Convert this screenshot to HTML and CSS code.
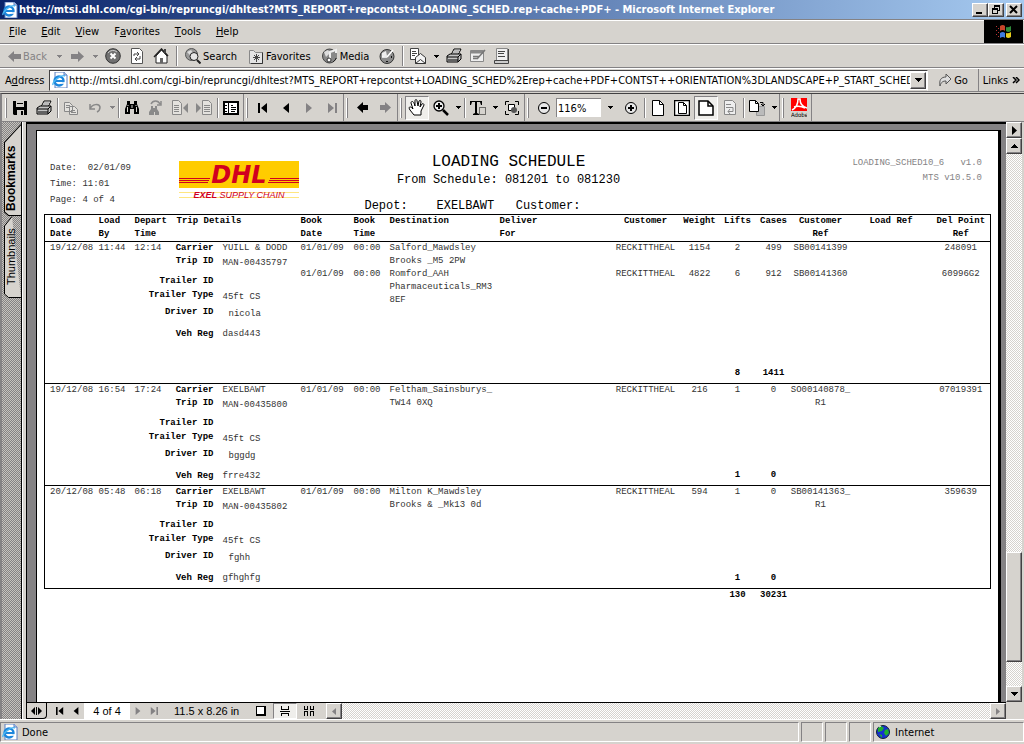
FILE: index.html
```
<!DOCTYPE html>
<html lang="en">
<head>
    <meta charset="UTF-8">
    <meta name="viewport" content="width=device-width, initial-scale=1.0">
    <title>Loading Schedule</title>
    <link rel="stylesheet" href="styles.css">
</head>
<body>

<!-- Shared icons -->
<svg width="0" height="0" class="defs">
    <symbol id="i-ie" viewBox="0 0 16 16">
        <path d="M3 0h9l3 3v13H3z" fill="#fff" stroke="#5a7fc0"/>
        <path d="M12 0v3h3" fill="#c8d8f4" stroke="#5a7fc0"/>
        <circle cx="7" cy="9" r="4.5" fill="none" stroke="#1c86dc" stroke-width="2.4"/>
        <path d="M3 9h8" stroke="#1c86dc" stroke-width="2"/>
        <path d="M9 11h4" stroke="#fff" stroke-width="1.6"/>
        <path d="M1 13C0 10 9 2 13 4" fill="none" stroke="#49b6f2" stroke-width="1.4"/>
    </symbol>
    <symbol id="i-down" viewBox="0 0 5 3"><path d="M0 0h5v1H0zM1 1h3v1H1zM2 2h1v1H2z"/></symbol>
    <symbol id="i-left" viewBox="0 0 6 10"><path d="M6 0v10L0 5z"/></symbol>
    <symbol id="i-right" viewBox="0 0 6 10"><path d="M0 0v10L6 5z"/></symbol>
    <symbol id="i-first" viewBox="0 0 10 10"><path d="M0 0h2v10H0zM9 0v10L3 5z"/></symbol>
    <symbol id="i-last" viewBox="0 0 10 10"><path d="M8 0h2v10H8zM1 0v10l6-5z"/></symbol>
    <symbol id="i-arrow" viewBox="0 0 13 11"><path d="M0 5.5L6 0v3h7v5H6v3z"/></symbol>
    <symbol id="i-arrow-short" viewBox="0 0 11 11"><path d="M0 5.5L6 0v3h5v5H6v3z"/></symbol>
    <symbol id="i-printer" viewBox="0 0 16 16">
        <path d="M5 7l3-6h7l-3 6z" fill="#fff" stroke="#000"/>
        <path d="M8 3h5M7 5h5" stroke="#777"/>
        <path d="M1 8l3-2h11v5l-3 3H1z" fill="#c4c4c4" stroke="#000"/>
        <path d="M1 9h11l3-3M12 9v5M2 12h10" fill="none" stroke="#000"/>
    </symbol>
</svg>

<header class="title-bar">
    <svg class="icon"><use href="#i-ie"/></svg>
    <h1>http://mtsi.dhl.com/cgi-bin/repruncgi/dhltest?MTS_REPORT+repcontst+LOADING_SCHED.rep+cache+PDF+ - Microsoft Internet Explorer</h1>
    <div class="window-buttons">
        <button type="button" aria-label="Minimize"><svg width="10" height="9"><path d="M1 7h6v2H1z"/></svg></button>
        <button type="button" aria-label="Restore"><svg width="10" height="9"><path d="M3 0h6v6H7V5h1V2H4v1H3zM1 3h6v6H1zM2 5v3h4V5z" fill-rule="evenodd"/></svg></button>
        <button type="button" aria-label="Close" class="close"><svg width="10" height="9"><path d="M1 1l7 7M8 1L1 8" stroke="#000" stroke-width="2"/></svg></button>
    </div>
</header>

<nav class="menu-bar">
    <button type="button"><u>F</u>ile</button>
    <button type="button"><u>E</u>dit</button>
    <button type="button"><u>V</u>iew</button>
    <button type="button">F<u>a</u>vorites</button>
    <button type="button"><u>T</u>ools</button>
    <button type="button"><u>H</u>elp</button>
    <div class="throbber">
        <svg width="18" height="16" viewBox="0 0 18 16">
            <path d="M1 2h1v1H1zM3 4h1v1H3zM1 6h1v1H1zM3 8h1v1H3zM1 10h1v1H1zM3 12h1v1H3z" fill="#b33"/>
            <path d="M5 2q3-2 5 0v5q-2-2-5 0z" fill="#c8442a"/>
            <path d="M11 3q2 1 5-1v5q-3 2-5 0z" fill="#2f8a3a"/>
            <path d="M5 9q3-2 5 0v5q-2-2-5 0z" fill="#3f7be0"/>
            <path d="M11 9q2 1 5-1v5q-3 2-5 0z" fill="#e8cc1c"/>
        </svg>
    </div>
</nav>

<div class="toolbar">
    <button type="button" class="labelled" disabled><svg class="arrow"><use href="#i-arrow"/></svg>Back</button>
    <button type="button" class="drop" disabled aria-label="Back list"><svg><use href="#i-down"/></svg></button>
    <button type="button" class="tool" disabled aria-label="Forward"><svg class="arrow flip"><use href="#i-arrow"/></svg></button>
    <button type="button" class="drop" disabled aria-label="Forward list"><svg><use href="#i-down"/></svg></button>
    <button type="button" class="tool" aria-label="Stop">
        <svg class="icon" viewBox="0 0 16 16"><circle cx="8" cy="8" r="7.3" fill="#707070" stroke="#333"/><path d="M3 5a6 6 0 0 1 9-1" stroke="#ccc" fill="none"/><path d="M5.5 5.5l5 5M10.5 5.5l-5 5" stroke="#fff" stroke-width="2"/></svg>
    </button>
    <button type="button" class="tool" aria-label="Refresh">
        <svg class="icon" viewBox="0 0 16 16"><path d="M2.5.5h8l3 3v12h-11z" fill="#fff" stroke="#555"/><path d="M5 8V6h5M8 4l2 2-2 2M11 8v3H6M8 9l-2 2 2 2" fill="none" stroke="#444"/></svg>
    </button>
    <button type="button" class="tool" aria-label="Home">
        <svg class="icon" viewBox="0 0 16 16"><path d="M3 8v7h11V8L8.5 2z" fill="#fff" stroke="#222"/><path d="M1 9l7.5-8L15 8" fill="none" stroke="#222" stroke-width="1.5"/><path d="M11 1h2v4h-2z" fill="#444"/><path d="M7 10h3v5H7z" fill="#666"/></svg>
    </button>
    <span class="sep"></span>
    <button type="button" class="labelled">
        <svg class="icon" viewBox="0 0 16 16"><circle cx="6.5" cy="6.5" r="6" fill="#999" stroke="#555"/><path d="M2 4l4-2 2 3-3 2zM9 2l2 2" fill="#ddd"/><circle cx="9" cy="8.5" r="4" fill="#e6e6e6" stroke="#222"/><path d="M12 12l3.5 3.5" stroke="#222" stroke-width="2"/></svg>Search
    </button>
    <button type="button" class="labelled">
        <svg class="icon" viewBox="0 0 16 16"><path d="M1.5 2.500h4l2 2h7v11h-13z" fill="#e4e4e4" stroke="#888"/><path d="M14.500 4.500v11H3" fill="none" stroke="#333"/><path d="M8.500 6v8M5 9.500h7M6 7l5 5M11 7l-5 5" stroke="#444"/></svg>Favorites
    </button>
    <button type="button" class="labelled">
        <svg class="icon" viewBox="0 0 16 16"><circle cx="7.5" cy="8" r="7" fill="#888" stroke="#444"/><path d="M2 4l4-2 2 3-4 4z" fill="#ddd"/><path d="M8 12V4l6-2v8" fill="none" stroke="#eee" stroke-width="2"/><circle cx="7" cy="12" r="2" fill="#fff" stroke="#333"/><path d="M14 5v6l-3 3" stroke="#222" fill="none"/></svg>Media
    </button>
    <button type="button" class="tool" aria-label="History">
        <svg class="icon" viewBox="0 0 16 16"><circle cx="8" cy="8.5" r="7" fill="#8c8c8c" stroke="#333"/><path d="M3 5l4-2 1 5-5 1z" fill="#eee"/><path d="M8 9l6-7M8 9H3" stroke="#fff" stroke-width="1.6"/><path d="M12 9h1M8 13v1" stroke="#111" stroke-width="2"/></svg>
    </button>
    <span class="sep"></span>
    <button type="button" class="tool" aria-label="Mail">
        <svg class="icon" viewBox="0 0 16 16"><path d="M.5.5h8v11h-8z" fill="#fff" stroke="#444"/><path d="M2 3.500h4M2 5.500h5M2 7.500h3" stroke="#444"/><path d="M5.500 9.500l5-4 5 4v6h-10z" fill="#f4f4f4" stroke="#333"/><path d="M5.500 15.500l5-4 5 4" fill="none" stroke="#333"/></svg>
    </button>
    <button type="button" class="drop" aria-label="Mail list"><svg><use href="#i-down"/></svg></button>
    <button type="button" class="tool" aria-label="Print"><svg class="icon"><use href="#i-printer"/></svg></button>
    <button type="button" class="tool" disabled aria-label="Edit">
        <svg class="icon" viewBox="0 0 16 16"><path d="M.5 2.500h13v11H.5z" fill="#eee" stroke="#888"/><path d="M1 4h12" stroke="#888" stroke-width="3"/><path d="M3 8.500h6M3 10.500h4M7 11l8-9" stroke="#777" stroke-width="1.5"/></svg>
    </button>
    <button type="button" class="tool" aria-label="Discuss">
        <svg class="icon" viewBox="0 0 16 16"><path d="M2.500.5h11v12h-11z" fill="#f0f0f0" stroke="#888"/><path d="M.5 12.500h14v3H.5z" fill="#ccc" stroke="#444"/><path d="M14.500 1v12M4 3.500h7M4 5.500h6M4 8.500h7" stroke="#444"/></svg>
    </button>
</div>

<form class="address-bar">
    <label for="address">A<u>d</u>dress</label>
    <div class="address-field">
        <svg class="icon"><use href="#i-ie"/></svg>
        <input type="text" id="address" value="http://mtsi.dhl.com/cgi-bin/repruncgi/dhltest?MTS_REPORT+repcontst+LOADING_SCHED%2Erep+cache+PDF+CONTST++ORIENTATION%3DLANDSCAPE+P_START_SCHED">
        <button type="button" class="raised" aria-label="Show addresses"><svg width="7" height="4"><path d="M0 0h7v1H0zM1 1h5v1H1zM2 2h3v1H2zM3 3h1v1H3z"/></svg></button>
    </div>
    <button type="submit" class="go">
        <svg width="14" height="14" viewBox="0 0 14 14"><path d="M2 13C1 7 3 4 8 4V1l5 5-5 5V8C5 8 3 9 2 13z" fill="#ddd" stroke="#555"/></svg>Go
    </button>
    <button type="button" class="links">Links <svg width="8" height="7" viewBox="0 0 8 7"><path d="M1 0l3 3-3 3M4 0l3 3-3 3" fill="none" stroke="#000" stroke-width="1.5"/></svg></button>
</form>

<div class="acrobat-bar">
    <div class="group">
        <button type="button" class="tool" aria-label="Save"><svg class="icon" viewBox="0 0 16 16"><path d="M1 1h14v14H2l-1-1z"/><path d="M4 1h8v6H4zM5 10h7v5H5z" fill="#d6d3ce"/><path d="M9 11h2v4H9zM5 3h6v1H5z"/></svg></button>
        <button type="button" class="tool" aria-label="Print"><svg class="icon"><use href="#i-printer"/></svg></button>
        <span class="sep"></span>
        <button type="button" class="tool" disabled aria-label="Copy"><svg class="icon" viewBox="0 0 16 16"><path d="M1.5 2.5h5l3 3v6h-8zM6.5 6.500h5l3 3v5h-8z" fill="#e4e2de" stroke="#888"/><path d="M3 5.500h4M3 7.500h3M8 10.500h4M8 12.500h5" stroke="#888"/></svg></button>
        <button type="button" class="tool" disabled aria-label="Undo"><svg class="icon" viewBox="0 0 16 16"><path d="M3 4v5h5M3 9c2-5 9-6 10-2 0 2-1 4-3 5" fill="none" stroke="#888" stroke-width="1.5"/></svg></button>
        <button type="button" class="drop" disabled aria-label="Undo list"><svg><use href="#i-down"/></svg></button>
        <span class="sep"></span>
        <button type="button" class="tool" aria-label="Find"><svg class="icon" viewBox="0 0 16 16"><path d="M3 1h3v3h4V1h3v3l2 5v5h-5V9H6v5H1V9l2-5z"/><path d="M3.500 7v5M12.500 7v5M8 5v3M4 5v1M12 5v1" stroke="#d6d3ce"/></svg></button>
        <button type="button" class="tool" disabled aria-label="Find again"><svg class="icon" viewBox="0 0 16 16"><path d="M3 6h2v2h2V6h2v3l2 3v3H7v-3H6v3H1v-3l2-3z" fill="#8a8a8a"/><path d="M3 4c2-4 7-4 9 0M13 1v4H9" fill="none" stroke="#8a8a8a" stroke-width="1.5"/></svg></button>
        <button type="button" class="tool" disabled aria-label="Previous hit"><svg class="icon" viewBox="0 0 16 16"><path d="M.5.5h6l3 3v11h-9z" fill="#e4e2de" stroke="#888"/><path d="M2 5.500h5M2 7.500h5M2 9.500h5M2 11.500h5" stroke="#888"/><path d="M16 3v10l-5-5z" fill="#888"/></svg></button>
        <button type="button" class="tool" disabled aria-label="Next hit"><svg class="icon" viewBox="0 0 16 16"><path d="M6.5.5h6l3 3v11h-9z" fill="#e4e2de" stroke="#888"/><path d="M8 5.500h6M8 7.500h6M8 9.500h6M8 11.500h6" stroke="#888"/><path d="M0 3v10l5-5z" fill="#888"/></svg></button>
        <span class="sep"></span>
        <button type="button" class="tool" aria-label="Navigation pane"><svg class="icon" viewBox="0 0 16 16"><path d="M1 2h14v12H1z" fill="#fff" stroke="#000" stroke-width="2"/><path d="M5.5 2v12M2 5.500h2M2 8.500h2M2 11.500h2" stroke="#000"/><path d="M8 5.500h2M8 7.500h5M8 9.500h5M8 11.500h4" stroke="#000"/></svg></button>
    </div>
    <div class="group compact">
        <button type="button" class="tool" aria-label="First page"><svg class="nav"><use href="#i-first"/></svg></button>
        <button type="button" class="tool" aria-label="Previous page"><svg class="nav"><use href="#i-left"/></svg></button>
        <button type="button" class="tool" disabled aria-label="Next page"><svg class="nav"><use href="#i-right"/></svg></button>
        <button type="button" class="tool" disabled aria-label="Last page"><svg class="nav"><use href="#i-last"/></svg></button>
    </div>
    <div class="group compact">
        <button type="button" class="tool" aria-label="Previous view"><svg class="view"><use href="#i-arrow-short"/></svg></button>
        <button type="button" class="tool" disabled aria-label="Next view"><svg class="view flip"><use href="#i-arrow-short"/></svg></button>
    </div>
    <div class="group">
        <button type="button" class="tool pressed" aria-label="Hand tool"><svg width="18" height="18" viewBox="0 0 18 18"><path d="M6 16l-4-5c-2-3 0-4 2-2l1 1-2-6c0-2 2-2 3 0l1 3V2c0-2 2-2 2 0l1 5 1-5c1-1 2-1 2 1l-1 5 2-3c1-1 2 0 2 1l-3 6v4z" fill="#fff" stroke="#000"/></svg></button>
        <button type="button" class="tool" aria-label="Zoom tool"><svg class="icon" viewBox="0 0 16 16"><circle cx="6" cy="6" r="5" fill="#eee" stroke="#000" stroke-width="1.3"/><path d="M3 6h6M6 3v6" stroke="#000" stroke-width="2"/><path d="M10 10l5 5" stroke="#000" stroke-width="2.500"/></svg></button>
        <button type="button" class="drop" aria-label="Zoom tools"><svg><use href="#i-down"/></svg></button>
        <span class="sep"></span>
        <button type="button" class="tool" aria-label="Select text"><svg width="18" height="16" viewBox="0 0 18 16"><path d="M1 1h12v4h-1l-1-3H8v11l2 1v1H4v-1l2-1V2H3L2 5H1z"/><path d="M10.5 7.500h6v7h-6z" fill="none" stroke="#000" stroke-dasharray="1 1"/></svg></button>
        <button type="button" class="drop" aria-label="Selection tools"><svg><use href="#i-down"/></svg></button>
        <button type="button" class="tool" aria-label="Select image"><svg class="icon" viewBox="0 0 16 16"><path d="M1.5 5V1.500H5M11 1.500h3.500V5M14.500 11v3.500H11M5 14.500H1.500V11" fill="none" stroke="#000"/><path d="M4.5 4.500h6v6h-6z" fill="#fff" stroke="#000"/><circle cx="10" cy="10" r="3" fill="#555"/></svg></button>
    </div>
    <div class="group">
        <button type="button" class="tool" aria-label="Zoom out"><svg class="icon" viewBox="0 0 16 16"><circle cx="8" cy="8" r="5.5" fill="#e8e8e8" stroke="#000"/><path d="M5 8h6" stroke="#000" stroke-width="2"/></svg></button>
        <input type="text" class="zoom-level" value="116%" aria-label="Zoom level">
        <button type="button" class="drop wide" aria-label="Zoom levels"><svg><use href="#i-down"/></svg></button>
        <button type="button" class="tool" aria-label="Zoom in"><svg class="icon" viewBox="0 0 16 16"><circle cx="8" cy="8" r="5.5" fill="#e8e8e8" stroke="#000"/><path d="M5 8h6M8 5v6" stroke="#000" stroke-width="2"/></svg></button>
        <span class="sep"></span>
        <button type="button" class="tool" aria-label="Actual size"><svg class="icon" viewBox="0 0 16 16"><path d="M2.5.5h7l4 4v11h-11z" fill="#fff" stroke="#000"/><path d="M9.5.5v4h4" fill="none" stroke="#000"/></svg></button>
        <button type="button" class="tool" aria-label="Fit page"><svg class="icon" viewBox="0 0 16 16"><path d="M.5.5h15v15H.5z" fill="#fff" stroke="#000" stroke-width="1.5"/><path d="M4.5 2.500h5l3 3v8h-8zM9.500 2.500v3h3" fill="none" stroke="#000"/></svg></button>
        <button type="button" class="tool pressed" aria-label="Fit width"><svg class="icon" viewBox="0 0 16 16"><path d="M1 1h9l5 5v9H1z" fill="#fff" stroke="#000" stroke-width="1.5"/><path d="M10 1v5h5" fill="none" stroke="#000" stroke-width="1.5"/></svg></button>
        <button type="button" class="tool" disabled aria-label="Reflow"><svg class="icon" viewBox="0 0 16 16"><path d="M2.5.5h8l3 3v11h-11z" fill="#eee" stroke="#888"/><path d="M4 4.500h5M4 7.500h7v4H6M8 9l-2 2.500 2 2.500" fill="none" stroke="#888"/></svg></button>
        <span class="sep"></span>
        <button type="button" class="tool" aria-label="Rotate view"><svg class="icon" viewBox="0 0 16 16"><path d="M7.5 6.500h8v9h-8z" fill="#bbb" stroke="#999"/><path d="M.5.5h6l3 3v8h-9z" fill="#fff" stroke="#000"/><path d="M6.500.5v3h3M11 2.500h3v3M12 4l2 2 2-2" fill="none" stroke="#000"/></svg></button>
        <button type="button" class="drop" aria-label="Rotate options"><svg><use href="#i-down"/></svg></button>
    </div>
    <div class="group">
        <button type="button" class="tool" aria-label="Adobe">
            <svg width="16" height="20" viewBox="0 0 16 20"><path d="M0 0h16v13H0z" fill="#f00"/><path d="M1 12C5 10 7 6 7 1h2c0 5 3 8 7 9M3 9c3-1 7-1 11 1" fill="none" stroke="#fff" stroke-width="1.5"/><text x="0" y="19" class="adobe-text">Adobe</text></svg>
        </button>
    </div>
</div>

<main class="viewer">
    <aside class="side-tabs">
        <button type="button" class="side-tab active">
            <svg viewBox="0 0 17 90" preserveAspectRatio="none"><path d="M17 .5L.5 18v68l4 3.500H17" fill="#d6d3ce" stroke="#000"/></svg>
            <span>Bookmarks</span>
        </button>
        <button type="button" class="side-tab">
            <svg viewBox="0 0 17 82" preserveAspectRatio="none"><path d="M8 .5L.5 10v68l4 3.500H17" fill="#d6d3ce" stroke="#000"/></svg>
            <span>Thumbnails</span>
        </button>
    </aside>
    <div class="splitter"></div>

    <div class="document">
        <div class="canvas">
            <article class="page">
                <div class="report-head">
                    <div class="run-info">
                        <p>Date:  02/01/09</p>
                        <p>Time: 11:01</p>
                        <p>Page: 4 of 4</p>
                    </div>
                    <svg class="logo" viewBox="0 0 120 38">
                        <path d="M0 0h120v27H0z" fill="#fc0"/>
                        <path d="M0 17.5h31M0 19.5h30M0 21.5h29M91 17.5h29M90 19.5h30M89 21.5h31" stroke="#d1001f"/>
                        <path d="M0 31.5h120M0 36.5h120" stroke="#ffe680"/>
                        <text x="60" y="22" class="logo-name">DHL</text>
                        <text x="60" y="37" class="logo-sub"><tspan class="logo-bold">EXEL</tspan> SUPPLY CHAIN</text>
                    </svg>
                    <div class="report-title">
                        <h2>LOADING SCHEDULE</h2>
                        <p>From Schedule: 081201 to 081230</p>
                        <p class="depot">Depot:    EXELBAWT   Customer:</p>
                    </div>
                    <div class="version">
                        <p>LOADING_SCHED10_6   v1.0</p>
                        <p>MTS v10.5.0</p>
                    </div>
                </div>

                <table class="schedule">
                    <colgroup>
                        <col class="c-date"><col class="c-by"><col class="c-depart"><col class="c-trip">
                        <col class="c-book"><col class="c-time"><col class="c-dest"><col class="c-deliver">
                        <col class="c-customer"><col class="c-weight"><col class="c-lifts"><col class="c-cases">
                        <col class="c-ref"><col class="c-load"><col class="c-point">
                    </colgroup>
                    <thead>
                        <tr>
                            <th>Load<br>Date</th>
                            <th>Load<br>By</th>
                            <th>Depart<br>Time</th>
                            <th>Trip Details</th>
                            <th>Book<br>Date</th>
                            <th>Book<br>Time</th>
                            <th>Destination</th>
                            <th>Deliver<br>For</th>
                            <th class="mid">Customer</th>
                            <th class="mid">Weight</th>
                            <th class="mid">Lifts</th>
                            <th class="mid">Cases</th>
                            <th class="mid">Customer<br>Ref</th>
                            <th class="mid">Load Ref</th>
                            <th class="mid">Del Point<br>Ref</th>
                        </tr>
                    </thead>
                    <tbody>
                        <tr>
                            <td rowspan="3">19/12/08</td>
                            <td rowspan="3">11:44</td>
                            <td rowspan="3">12:14</td>
                            <td rowspan="3">
                                <dl class="trip">
                                    <dt>Carrier</dt><dd>YUILL &amp; DODD</dd>
                                    <dt>Trip ID</dt><dd class="low">MAN-00435797</dd>
                                    <dt>Trailer ID</dt><dd></dd>
                                    <dt>Trailer Type</dt><dd class="low">45ft CS</dd>
                                    <dt>Driver ID</dt><dd class="low driver">nicola</dd>
                                    <dt>Veh Reg</dt><dd>dasd443</dd>
                                </dl>
                            </td>
                            <td>01/01/09</td>
                            <td>00:00</td>
                            <td>Salford_Mawdsley<br>Brooks _M5 2PW</td>
                            <td></td>
                            <td class="mid">RECKITTHEAL</td>
                            <td class="mid">1154</td>
                            <td class="mid">2</td>
                            <td class="mid">499</td>
                            <td class="mid">SB00141399</td>
                            <td></td>
                            <td class="mid">248091</td>
                        </tr>
                        <tr>
                            <td>01/01/09</td>
                            <td>00:00</td>
                            <td>Romford_AAH<br>Pharmaceuticals_RM3<br>8EF</td>
                            <td></td>
                            <td class="mid">RECKITTHEAL</td>
                            <td class="mid">4822</td>
                            <td class="mid">6</td>
                            <td class="mid">912</td>
                            <td class="mid">SB00141360</td>
                            <td></td>
                            <td class="mid">60996G2</td>
                        </tr>
                        <tr class="totals">
                            <td colspan="6"></td>
                            <td class="mid">8</td>
                            <td class="mid">1411</td>
                            <td colspan="3"></td>
                        </tr>
                    </tbody>
                    <tbody>
                        <tr>
                            <td rowspan="2">19/12/08</td>
                            <td rowspan="2">16:54</td>
                            <td rowspan="2">17:24</td>
                            <td rowspan="2">
                                <dl class="trip">
                                    <dt>Carrier</dt><dd>EXELBAWT</dd>
                                    <dt>Trip ID</dt><dd class="low">MAN-00435800</dd>
                                    <dt>Trailer ID</dt><dd></dd>
                                    <dt>Trailer Type</dt><dd class="low">45ft CS</dd>
                                    <dt>Driver ID</dt><dd class="low driver">bggdg</dd>
                                    <dt>Veh Reg</dt><dd>frre432</dd>
                                </dl>
                            </td>
                            <td>01/01/09</td>
                            <td>00:00</td>
                            <td>Feltham_Sainsburys_<br>TW14 0XQ</td>
                            <td></td>
                            <td class="mid">RECKITTHEAL</td>
                            <td class="mid">216</td>
                            <td class="mid">1</td>
                            <td class="mid">0</td>
                            <td class="mid">SO00140878_<br>R1</td>
                            <td></td>
                            <td class="mid">07019391</td>
                        </tr>
                        <tr class="totals">
                            <td colspan="6"></td>
                            <td class="mid">1</td>
                            <td class="mid">0</td>
                            <td colspan="3"></td>
                        </tr>
                    </tbody>
                    <tbody>
                        <tr>
                            <td rowspan="2">20/12/08</td>
                            <td rowspan="2">05:48</td>
                            <td rowspan="2">06:18</td>
                            <td rowspan="2">
                                <dl class="trip">
                                    <dt>Carrier</dt><dd>EXELBAWT</dd>
                                    <dt>Trip ID</dt><dd class="low">MAN-00435802</dd>
                                    <dt>Trailer ID</dt><dd></dd>
                                    <dt>Trailer Type</dt><dd class="low">45ft CS</dd>
                                    <dt>Driver ID</dt><dd class="low driver">fghh</dd>
                                    <dt>Veh Reg</dt><dd>gfhghfg</dd>
                                </dl>
                            </td>
                            <td>01/01/09</td>
                            <td>00:00</td>
                            <td>Milton K_Mawdsley<br>Brooks &amp; _Mk13 0d</td>
                            <td></td>
                            <td class="mid">RECKITTHEAL</td>
                            <td class="mid">594</td>
                            <td class="mid">1</td>
                            <td class="mid">0</td>
                            <td class="mid">SB00141363_<br>R1</td>
                            <td></td>
                            <td class="mid">359639</td>
                        </tr>
                        <tr class="totals">
                            <td colspan="6"></td>
                            <td class="mid">1</td>
                            <td class="mid">0</td>
                            <td colspan="3"></td>
                        </tr>
                    </tbody>
                    <tfoot>
                        <tr>
                            <td colspan="10"></td>
                            <td class="mid">130</td>
                            <td class="mid">30231</td>
                            <td colspan="3"></td>
                        </tr>
                    </tfoot>
                </table>
            </article>
        </div>

        <div class="page-bar">
            <button type="button" class="pane-toggle" aria-label="Toggle pane"><svg width="11" height="8"><path d="M4 0v8L0 4zM7 0v8l4-4zM5 0h1v8H5z"/></svg></button>
            <button type="button" class="mini" aria-label="First page"><svg><use href="#i-first"/></svg></button>
            <button type="button" class="mini" aria-label="Previous page"><svg><use href="#i-left"/></svg></button>
            <input type="text" class="page-number" value="4 of 4" aria-label="Page">
            <button type="button" class="mini" disabled aria-label="Next page"><svg><use href="#i-right"/></svg></button>
            <button type="button" class="mini" disabled aria-label="Last page"><svg><use href="#i-last"/></svg></button>
            <span class="page-size">11.5 x 8.26 in</span>
            <button type="button" class="layout" aria-label="Single page"><svg width="10" height="10"><path d="M0 0h10v10H0z"/><path d="M1 1h7v7H1z" fill="#fff"/></svg></button>
            <button type="button" class="layout pressed" aria-label="Continuous"><svg width="10" height="10"><path d="M1 0h1v3h6V0h1v4H1zM0 5h10v1H0zM1 7h8v3H8V8H2v2H1z"/></svg></button>
            <button type="button" class="layout" aria-label="Continuous facing"><svg width="10" height="10"><path d="M0 0h1v3h2V0h1v4H0zM6 0h1v3h2V0h1v4H6zM0 5h4v5H3V6H1v4H0zM6 5h4v5H9V6H7v4H6z"/></svg></button>
            <button type="button" class="raised" disabled aria-label="Scroll left"><svg width="4" height="7"><path d="M4 0v7L0 3.5z"/></svg></button>
            <div class="track"></div>
            <button type="button" class="raised" disabled aria-label="Scroll right"><svg width="4" height="7"><path d="M0 0v7l4-3.5z"/></svg></button>
        </div>
    </div>

    <div class="scroll-bar">
        <button type="button" class="raised" aria-label="Toolbar menu"><svg width="5" height="9"><path d="M0 0v9l5-4.5z"/></svg></button>
        <button type="button" class="raised" aria-label="Scroll up"><svg width="7" height="4"><path d="M3 0h1v1H3zM2 1h3v1H2zM1 2h5v1H1zM0 3h7v1H0z"/></svg></button>
        <div class="track track-top"></div>
        <div class="thumb"></div>
        <div class="track track-bottom"></div>
        <button type="button" class="raised" aria-label="Scroll down"><svg width="7" height="4"><path d="M0 0h7v1H0zM1 1h5v1H1zM2 2h3v1H2zM3 3h1v1H3z"/></svg></button>
        <div class="corner"></div>
    </div>
</main>

<footer class="status-bar">
    <div class="status-main"><svg class="icon"><use href="#i-ie"/></svg>Done</div>
    <div class="status-cell"></div>
    <div class="status-cell"></div>
    <div class="status-cell"></div>
    <div class="status-zone">
        <svg width="14" height="14" viewBox="0 0 14 14"><circle cx="7" cy="7" r="6.5" fill="#1530d0" stroke="#123"/><path d="M2 3l3-2 3 2-2 3-4 1zM9 5l3-1 1 4-3 3-2-3zM3 9l3 1v3z" fill="#1fb02c"/><path d="M3 2l2-1" stroke="#fff"/></svg>
        Internet
    </div>
</footer>

</body>
</html>
```
FILE: styles.css
```
* {
    box-sizing: border-box;
}

body {
    margin: 0;
    height: 100vh;
    display: flex;
    flex-direction: column;
    overflow: hidden;
    background: #d6d3ce;
    color: #000;
    font-family: Tahoma, "DejaVu Sans Condensed", sans-serif;
    font-size: 11px;
}

h1, h2, p, dl, dd {
    margin: 0;
}

button, input {
    font: inherit;
    color: inherit;
    border: 0;
    border-radius: 0;
    padding: 0;
    margin: 0;
    background: none;
}

button {
    display: flex;
    align-items: center;
    justify-content: center;
    flex: none;
}

button:disabled {
    color: #848284;
    fill: #848284;
}

svg {
    flex: none;
    display: block;
}

.defs {
    position: absolute;
}

.icon {
    width: 16px;
    height: 16px;
}

.arrow {
    width: 13px;
    height: 11px;
}

.view {
    width: 11px;
    height: 11px;
}

.flip {
    transform: scaleX(-1);
}

.raised, .thumb, .window-buttons button {
    background: #d6d3ce;
    border: 1px solid;
    border-color: #fff #424142 #424142 #fff;
    box-shadow: inset -1px -1px #848284;
}

.pressed {
    border: 1px solid;
    border-color: #848284 #fff #fff #848284;
    background: #efeeeb;
}

/* Title bar */
.title-bar {
    flex: none;
    height: 19px;
    display: flex;
    align-items: center;
    padding: 0 2px;
    background: linear-gradient(to right, #0a246a, #a6caf0);
    color: #fff;
}

.title-bar h1 {
    flex: 1;
    min-width: 0;
    overflow: hidden;
    white-space: nowrap;
    font-size: 11px;
    line-height: 18px;
    padding-left: 1px;
}

.window-buttons {
    display: flex;
}

.window-buttons button {
    width: 16px;
    height: 14px;
}

.window-buttons .close {
    margin-left: 2px;
}

/* Menu bar */
.menu-bar {
    flex: none;
    height: 25px;
    display: flex;
    gap: 15px;
    padding: 0 1px 0 9px;
    border-top: 1px solid #848284;
    border-bottom: 1px solid #848284;
    box-shadow: inset 0 1px #fff;
}

.throbber {
    margin-left: auto;
    width: 39px;
    background: #000;
    display: flex;
    align-items: center;
    justify-content: center;
}

/* Browser toolbar */
.toolbar {
    flex: none;
    height: 24px;
    display: flex;
    align-items: center;
    padding-left: 3px;
    border-top: 1px solid #fff;
    border-bottom: 1px solid #848284;
}

.tool {
    width: 24px;
    height: 24px;
}

.labelled {
    gap: 2px;
    padding: 0 6px 0 5px;
    white-space: nowrap;
}

.drop {
    width: 10px;
    height: 24px;
}

.toolbar .drop {
    width: 12px;
}

.drop svg {
    width: 5px;
    height: 3px;
}

.drop.wide {
    width: 18px;
}

.sep {
    flex: none;
    width: 1px;
    height: 20px;
    margin: 0 3px;
    background: #848284;
    box-shadow: 1px 0 #fff;
}

/* Address bar */
.address-bar {
    flex: none;
    height: 24px;
    display: flex;
    align-items: center;
    padding-left: 5px;
    border-top: 1px solid #fff;
    border-bottom: 1px solid #848284;
}

.address-bar label {
    width: 44px;
}

.address-field {
    flex: 1;
    min-width: 0;
    height: 21px;
    display: flex;
    align-items: center;
    padding: 1px 1px 1px 2px;
    background: #fff;
    border: 1px solid;
    border-color: #424142 #fff #d6d3ce #424142;
}

.address-field input {
    flex: 1;
    min-width: 0;
    padding-left: 1px;
}

.address-field .raised {
    width: 16px;
    height: 17px;
}

.go {
    width: 50px;
    height: 22px;
    gap: 2px;
}

.links {
    width: 46px;
    height: 22px;
    gap: 4px;
    border-left: 1px solid #848284;
}

/* Acrobat toolbar */
.acrobat-bar {
    flex: none;
    height: 29px;
    display: flex;
    margin-top: 1px;
    border-top: 1px solid #424142;
    border-left: 2px solid #848284;
    border-bottom: 1px solid #848284;
}

.group {
    display: flex;
    align-items: center;
    padding-left: 8px;
    border-right: 1px solid #848284;
    margin-right: -1px;
    background: linear-gradient(#848284, #848284) 4px 4px / 1px 20px no-repeat, linear-gradient(#fff, #fff) 3px 4px / 1px 20px no-repeat;
}

.group:first-child {
    padding-left: 6px;
}

.group .sep {
    margin: 0 1px;
}

.compact .tool {
    width: 23px;
}

.nav {
    height: 10px;
    width: 10px;
}

.zoom-level {
    width: 45px;
    height: 19px;
    padding-left: 1px;
    background: #fff;
    border-top: 1px solid #848284;
    border-left: 1px solid #848284;
}

.adobe-text {
    font-size: 6px;
}

/* Viewer */
.viewer {
    flex: 1;
    min-height: 0;
    display: flex;
    border-left: 2px solid #848284;
}

.side-tabs {
    flex: none;
    width: 20px;
    padding: 2px 0 0 2px;
    border-right: 1px solid #000;
    background: repeating-conic-gradient(#848284 0 25%, #c6c3bd 0 50%) 0 0 / 2px 2px;
}

.side-tab {
    display: grid;
    width: 17px;
    height: 92px;
}

.side-tab svg, .side-tab span {
    grid-area: 1 / 1;
    width: 17px;
    height: 100%;
}

.side-tab span {
    writing-mode: vertical-rl;
    transform: rotate(180deg);
    line-height: 15px;
    font-family: Arial, "Liberation Sans", sans-serif;
    padding-bottom: 16px;
}

.side-tab.active {
    font-weight: bold;
    font-size: 12px;
}

.side-tab:last-child {
    height: 82px;
}

.side-tab:last-child span {
    padding-bottom: 0;
}

.splitter {
    flex: none;
    width: 5px;
    background: #d6d3ce;
    border-left: 1px solid #fff;
    border-right: 1px solid #000;
}

.document {
    flex: 1;
    min-width: 0;
    display: flex;
    flex-direction: column;
}

.canvas {
    flex: 1;
    min-height: 0;
    overflow: hidden;
    display: flex;
    padding: 6px 5px 0 9px;
    background: #848284;
    border-top: 2px solid #000;
}

.page {
    flex: 1;
    min-width: 0;
    padding: 25px 7px 0;
    background: #fff;
    border: 1px solid #000;
    border-right-width: 3px;
    border-bottom: 0;
    font-family: "Courier New", "Liberation Mono", monospace;
    font-size: 9px;
}

.report-head {
    display: grid;
    grid-template-columns: 129px 120px 1fr 264px;
    padding: 0 9px 0 6px;
}

.report-head p {
    white-space: pre;
}

.run-info {
    padding-top: 4px;
    line-height: 16px;
    color: #333;
}

.logo {
    width: 120px;
    height: 38px;
    margin-top: 5px;
}

.logo-name {
    font: italic bold 24px "DejaVu Sans", sans-serif;
    fill: #d1001f;
    text-anchor: middle;
}

.logo-sub {
    font: italic 9px "Liberation Sans", sans-serif;
    fill: #d1001f;
    text-anchor: middle;
}

.logo-bold {
    font-weight: bold;
}

.report-title {
    text-align: center;
    font-size: 12px;
    line-height: 16px;
}

.report-title h2 {
    font-size: 16px;
    font-weight: normal;
    line-height: 12px;
    padding-bottom: 4px;
}

.report-title .depot {
    padding: 10px 72px 0 0;
}

.version {
    text-align: right;
    line-height: 15px;
    color: #848284;
}

/* Schedule table */
.schedule {
    width: 100%;
    table-layout: fixed;
    border-collapse: collapse;
    line-height: 13px;
    color: #333;
}

.schedule thead, .schedule tbody {
    border: 1px solid #000;
}

.schedule th, .schedule td {
    padding: 0 0 0 5px;
    text-align: left;
    vertical-align: top;
    white-space: nowrap;
}

.schedule th {
    color: #000;
}

.schedule .mid {
    padding: 0;
    text-align: center;
}

.schedule .totals td {
    height: 76px;
    padding-bottom: 3px;
    vertical-align: bottom;
    font-weight: bold;
    color: #000;
}

.schedule tfoot td {
    font-weight: bold;
    color: #000;
}

.c-date { width: 49px; }
.c-by { width: 36px; }
.c-depart { width: 42px; }
.c-trip { width: 124px; }
.c-book { width: 53px; }
.c-time { width: 36px; }
.c-dest { width: 110px; }
.c-deliver { width: 116px; }
.c-customer { width: 70px; }
.c-weight { width: 38px; }
.c-lifts { width: 38px; }
.c-cases { width: 34px; }
.c-ref { width: 60px; }
.c-load { width: 81px; }
.c-point { width: 59px; }

/* Long labels run out to the left, under the depart time */
.trip {
    display: grid;
    grid-template-columns: 37px 1fr;
    grid-template-rows: 13px 20px 14px 17px 22px 13px;
    column-gap: 9px;
}

.trip dt {
    justify-self: end;
    font-weight: bold;
    color: #000;
}

.trip .low {
    padding-top: 2px;
}

.trip .driver {
    padding-left: 6px;
}

/* Page bar under the document */
.page-bar {
    flex: none;
    height: 17px;
    display: flex;
    border-top: 1px solid #000;
    font-family: Arial, "Liberation Sans", sans-serif;
}

.pane-toggle {
    width: 20px;
    border: 1px solid #000;
    border-width: 0 1px 1px 0;
    border-radius: 0 0 4px 0;
    margin-right: 5px;
}

.mini {
    width: 16px;
}

.mini svg {
    width: 8px;
    height: 8px;
}

.page-number {
    width: 46px;
    background: #fff;
    text-align: center;
}

.page-size {
    line-height: 16px;
    padding: 0 10px 0 12px;
}

.layout {
    width: 24px;
}

.page-bar .raised {
    width: 16px;
}

.layout + .raised {
    margin-left: 5px;
}

.track {
    flex: 1;
    background: repeating-conic-gradient(#fff 0 25%, #d6d3ce 0 50%) 0 0 / 2px 2px;
}

/* Vertical scroll bar */
.scroll-bar {
    flex: none;
    width: 18px;
    display: flex;
    flex-direction: column;
    padding-right: 2px;
}

.scroll-bar .raised {
    height: 16px;
}

.track-top {
    flex: 399;
}

.thumb {
    flex: 109;
}

.track-bottom {
    flex: 24;
}

.corner {
    height: 17px;
}

/* Status bar */
.status-bar {
    flex: none;
    height: 25px;
    display: flex;
    gap: 2px;
    padding: 2px 0;
    border-top: 1px solid #fff;
}

.status-bar div {
    display: flex;
    align-items: center;
    border: 1px solid;
    border-color: #848284 #fff #fff #848284;
}

.status-main {
    flex: 1;
    gap: 4px;
    padding-left: 1px;
}

.status-cell {
    width: 22px;
}

.status-zone {
    width: 151px;
    gap: 5px;
    padding-left: 2px;
}
```
